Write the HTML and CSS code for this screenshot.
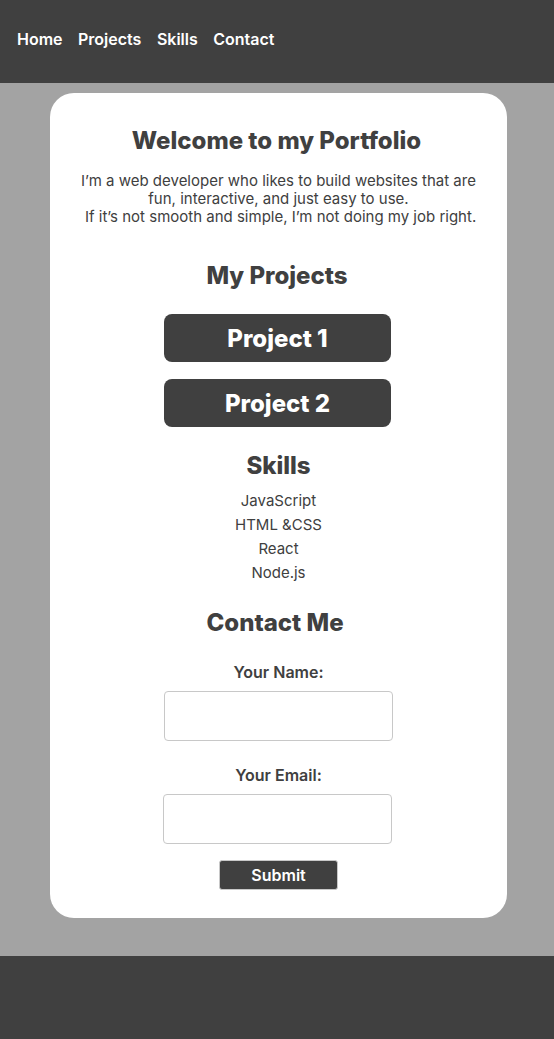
FILE: index.html
```html
<!DOCTYPE html>
<html lang="en">
<head>
<meta charset="utf-8">
<title>Portfolio</title>
<link rel="stylesheet" href="styles.css">
</head>
<body>
<header class="topbar">
  <nav class="nav">
    <a href="#" class="nav-link">Home</a>
    <a href="#" class="nav-link">Projects</a>
    <a href="#" class="nav-link">Skills</a>
    <a href="#" class="nav-link">Contact</a>
  </nav>
</header>
<main class="main">
  <section class="card">
    <h1 class="title">Welcome to my Portfolio</h1>
    <p class="intro">I’m a web developer who likes to build websites that are fun, interactive, and just easy to use.<br>&nbsp;If it’s not smooth and simple, I’m not doing my job right.</p>
    <h2 class="heading heading-projects">My Projects</h2>
    <div class="projects">
      <a href="#" class="project-btn">Project 1</a>
      <a href="#" class="project-btn">Project 2</a>
    </div>
    <h2 class="heading heading-skills">Skills</h2>
    <ul class="skills">
      <li>JavaScript</li>
      <li>HTML &amp;CSS</li>
      <li>React</li>
      <li>Node.js</li>
    </ul>
    <h2 class="heading heading-contact">Contact Me</h2>
    <form class="form">
      <label class="label label-first" for="name">Your Name:</label>
      <input class="input" id="name" type="text">
      <label class="label" for="email">Your Email:</label>
      <input class="input input-email" id="email" type="email">
      <button type="button" class="submit">Submit</button>
    </form>
  </section>
</main>
<footer class="footer"></footer>
</body>
</html>
```
FILE: styles.css
```css
* { box-sizing: border-box; }
html, body { margin: 0; padding: 0; }
body {
  font-family: Inter, "Noto Sans", sans-serif;
  color: #404040;
  background: #a3a3a3;
}
.topbar {
  background: #404040;
  height: 83px;
  display: flex;
  align-items: center;
  padding-left: 17px;
}
.nav {
  display: flex;
  gap: 15.5px;
}
.nav-link {
  color: #fff;
  text-decoration: none;
  font-size: 16px;
  font-weight: 600;
  line-height: 20px;
  margin-top: -6px;
}
.main {
  padding: 10px 0 38px 50px;
}
.card {
  width: 457px;
  background: #fff;
  border-radius: 24px;
  padding: 33px 0 28px;
  display: flex;
  flex-direction: column;
  align-items: center;
  text-align: center;
}
.title {
  margin: 0 4px 0 0;
  font-size: 24px;
  font-weight: 800;
  line-height: 29px;
}
.intro {
  margin: 17px 0 0;
  font-size: 15px;
  line-height: 18px;
  width: 410px;
}
.heading {
  margin: 0;
  font-size: 24px;
  font-weight: 800;
  line-height: 29px;
}
.heading-projects { margin: 34.5px 3px 0 0; }
.heading-skills { margin-top: 24.5px; }
.heading-contact { margin: 23.5px 7px 0 0; }
.projects {
  margin-top: 24px;
  display: flex;
  flex-direction: column;
  gap: 17px;
}
.project-btn {
  display: flex;
  align-items: center;
  justify-content: center;
  width: 227px;
  height: 48px;
  padding-top: 2px;
  margin-left: -2px;
  background: #404040;
  color: #fff;
  border-radius: 8px;
  text-decoration: none;
  font-size: 24px;
  font-weight: 800;
}
.skills {
  list-style: none;
  margin: 8.5px 0 0;
  padding: 0;
  font-size: 15px;
  line-height: 24px;
}
.form {
  display: flex;
  flex-direction: column;
  align-items: center;
}
.label {
  margin-top: 25px;
  font-size: 16px;
  font-weight: 600;
  line-height: 19px;
}
.label-first { margin-top: 26px; }
.input {
  margin-top: 9px;
  width: 229px;
  height: 50px;
  border: 1px solid #c8c8c8;
  border-radius: 4px;
  background: #fff;
}
.input-email { margin-left: -2px; }
.submit {
  margin-top: 16px;
  width: 119px;
  height: 30px;
  padding-top: 0;
  background: #404040;
  color: #fff;
  border: 1px solid #c8c8c8;
  border-radius: 3px;
  font-family: Inter, "Noto Sans", sans-serif;
  font-size: 16px;
  font-weight: 600;
}
.footer {
  background: #404040;
  height: 83px;
}
```
